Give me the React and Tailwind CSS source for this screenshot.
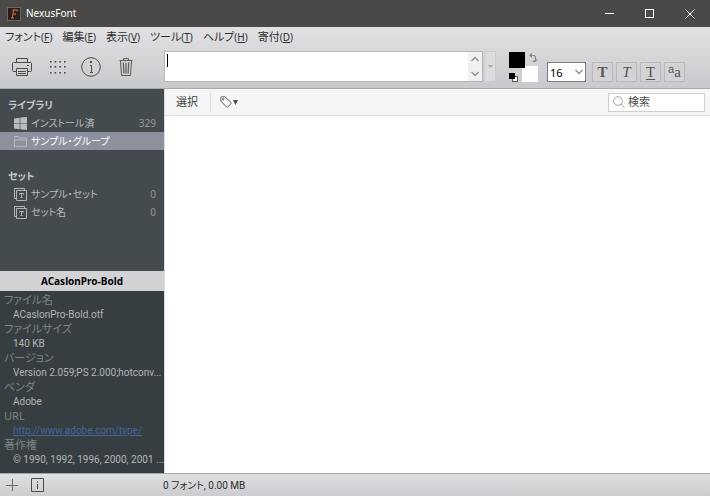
const menus = [
  { name: "フォント", hotkey: "F" },
  { name: "編集", hotkey: "E" },
  { name: "表示", hotkey: "V" },
  { name: "ツール", hotkey: "T" },
  { name: "ヘルプ", hotkey: "H" },
  { name: "寄付", hotkey: "D" },
];

const details = [
  { label: "ファイル名", value: "ACaslonPro-Bold.otf" },
  { label: "ファイルサイズ", value: "140 KB" },
  { label: "バージョン", value: "Version 2.059;PS 2.000;hotconv..." },
  { label: "ベンダ", value: "Adobe" },
  { label: "URL", value: "http://www.adobe.com/type/", link: true },
  { label: "著作権", value: "© 1990, 1992, 1996, 2000, 2001 ..." },
];

function PrinterIcon() {
  return (
    <svg width="20" height="20" viewBox="0 0 20 20" fill="none" stroke="#4b4a4c">
      <path d="M4.5 5.500v-4h11v4M4.500 14.500h-3a1 1 0 0 1-1-1v-7a1 1 0 0 1 1-1h17a1 1 0 0 1 1 1v7a1 1 0 0 1-1 1h-3M4.500 11.500h11v7h-11zM15 8.500h2" />
      <path d="M6 14.500h8M6 16.500h8" />
    </svg>
  );
}

function GridIcon() {
  return (
    <svg width="18" height="20" viewBox="0 0 18 20" fill="#4b4a4c">
      {[4, 9, 15].map((y) =>
        [2, 6.6, 11.3, 16].map((x) => <rect key={`${x}-${y}`} x={x} y={y} width="1.600" height="1.600" />)
      )}
    </svg>
  );
}

function InfoIcon() {
  return (
    <svg width="20" height="20" viewBox="0 0 20 20" fill="none" stroke="#4b4a4c">
      <circle cx="10" cy="10" r="9.3" />
      <path d="M9 8.500h1.500V15M9 15.500h3" />
      <rect x="9.5" y="4.5" width="1" height="1" fill="#4b4a4c" />
    </svg>
  );
}

function TrashIcon() {
  return (
    <svg width="14" height="20" viewBox="0 0 14 20" fill="none" stroke="#5b5a5c">
      <path d="M.5 3.500h13M4.500 3V1.500h5V3M1.500 4l1 14.500h9l1-14.500" />
      <path d="M4.300 5.500l.6 11M7 5.500v11M9.700 5.500l-.6 11" strokeWidth="1.200" />
    </svg>
  );
}

function WindowsIcon() {
  return (
    <svg width="13" height="13" viewBox="0 0 13 13" fill="#b9bcbe">
      <path d="M0 1.500l5.700-.8v5.500H0zM6.300.600L13 0v6.200H6.300zM0 6.800h5.700v5.500L0 11.500zM6.300 6.800H13V13l-6.700-.7z" />
    </svg>
  );
}

function FolderIcon() {
  return (
    <svg width="13" height="13" viewBox="0 0 13 13" fill="none" stroke="#b4b8c0">
      <path d="M.5 11.500v-10h4l1 1.500h7v8.500zM.5 5h12" />
    </svg>
  );
}

function SetIcon() {
  return (
    <svg width="13" height="13" viewBox="0 0 13 13" fill="none" stroke="#b0b4b6">
      <path d="M2.500 10.500h-2V.5h10v2M2.500 2.500h10v10h-10zM5.500 6.500v-1h4v1M7.500 5.500v4M6.500 9.500h2" />
    </svg>
  );
}

function Chevron({ up }) {
  return (
    <svg width="8" height="6" viewBox="0 0 8 6" fill="none" stroke="#8c8c8c" strokeWidth="1.300">
      <path d={up ? "M.5 5L4 1.500 7.500 5" : "M.5 1L4 4.500 7.500 1"} />
    </svg>
  );
}

function TitleBar() {
  return (
    <header className="flex h-[27px] shrink-0 items-center bg-[#4a4947] text-white">
      <svg className="ml-[7px]" width="14" height="14" viewBox="0 0 14 14">
        <rect x=".5" y=".5" width="13" height="13" fill="#29211f" stroke="#6b6765" />
        <path d="M5.500 3h5M6.500 3L5.200 11M5.500 7h3.500M4 11h2.800M10.500 3v1.500" fill="none" stroke="#b9603c" strokeWidth="1.300" />
      </svg>
      <h1 className="ml-[5px] flex-1 text-[10px]">NexusFont</h1>
      <button aria-label="最小化" className="flex w-10 justify-center">
        <svg width="10" height="10" stroke="#fff"><path d="M0 4.500h9" /></svg>
      </button>
      <button aria-label="最大化" className="flex w-10 justify-center">
        <svg width="10" height="10" fill="none" stroke="#fff"><rect x=".5" y=".5" width="8" height="8" /></svg>
      </button>
      <button aria-label="閉じる" className="flex w-10 justify-center">
        <svg width="10" height="10" stroke="#fff"><path d="M.5.500l9 9M9.500.500l-9 9" /></svg>
      </button>
    </header>
  );
}

function StyleButton({ label, children }) {
  return (
    <button
      aria-label={label}
      className="flex h-5 w-[21px] items-center justify-center border border-[#b9b8bb] bg-[#d3d2d5] font-['Liberation_Serif',serif] text-[15px] leading-none text-[#565557]"
    >
      {children}
    </button>
  );
}

function Toolbar() {
  return (
    <div className="flex h-[37px] shrink-0 items-start">
      <div className="flex w-[164px] shrink-0 items-center pt-[6px] pl-[12px]">
        <button aria-label="印刷"><PrinterIcon /></button>
        <button aria-label="一覧" className="ml-4"><GridIcon /></button>
        <button aria-label="情報" className="ml-[15px]"><InfoIcon /></button>
        <button aria-label="削除" className="ml-[18px]"><TrashIcon /></button>
      </div>
      <div className="relative h-[31px] flex-1 border border-[#b5b4b7] bg-white">
        <textarea
          aria-label="サンプルテキスト"
          className="block h-full w-full resize-none px-1 text-[12px] outline-none"
        />
        <span className="absolute top-[2px] left-[2px] h-[13px] w-px bg-black" />
        <div className="absolute inset-y-0 right-0 flex w-[14px] flex-col items-center justify-between bg-[#f1f1f2] py-1">
          <button aria-label="上へ"><Chevron up /></button>
          <button aria-label="下へ"><Chevron /></button>
        </div>
      </div>
      <button aria-label="履歴" className="ml-px flex h-[31px] w-3 items-center justify-center border border-[#cbcacd] bg-[#dcdbde]">
        <svg width="5" height="3" fill="#a5a4a7"><path d="M0 0h5L2.500 3z" /></svg>
      </button>
      <div className="mt-px ml-[13px] grid h-[30px] w-[30px] grid-cols-2">
        <div className="relative">
          <button aria-label="文字色" className="absolute top-0 left-0 z-10 size-4 bg-black" />
          <button aria-label="背景色" className="absolute top-[14px] left-[13px] size-4 bg-white" />
          <button aria-label="初期色" className="absolute top-[21px] left-0">
            <svg className="block" width="9" height="9">
              <rect x="3.500" y="3.500" width="5" height="5" fill="#fff" stroke="#555" />
              <rect width="6" height="6" fill="#000" />
            </svg>
          </button>
        </div>
        <button aria-label="色を入れ替え" className="mt-px ml-[5px] h-[9px]">
          <svg className="block" width="9" height="9" fill="#88878a">
            <path d="M0 2.500L3 0v5zM4 9l-.5-1L9 6 6.500 9z" />
            <path d="M2.500 2.500h2a2 2 0 0 1 2 2V7" fill="none" stroke="#88878a" strokeWidth="1.200" />
          </svg>
        </button>
      </div>
      <div className="relative mt-[11px] ml-2 h-5 w-[39px]">
        <select
          aria-label="サイズ"
          className="block h-full w-full appearance-none border border-[#7f7e81] bg-white pl-[2px] text-[11px] leading-none text-black"
        >
          <option>16</option>
        </select>
        <span className="pointer-events-none absolute top-[7px] right-[3px]">
          <Chevron />
        </span>
      </div>
      <div className="mt-[11px] mr-[25px] ml-[6px] flex gap-[3px]">
        <StyleButton label="太字"><b>T</b></StyleButton>
        <StyleButton label="斜体"><i>T</i></StyleButton>
        <StyleButton label="下線"><u className="underline-offset-2">T</u></StyleButton>
        <StyleButton label="アンチエイリアス">
          <span className="mb-[6px] font-['Liberation_Sans',sans-serif] text-[11px]">a</span>
          <span className="mt-px">a</span>
        </StyleButton>
      </div>
    </div>
  );
}

function SideItem({ icon, name, count, selected }) {
  return (
    <li>
      <button
        className={`flex h-[18px] w-full items-center pr-2 pl-[14px] text-[10px] ${
          selected ? "bg-[#8d919d] text-white" : "text-[#b9bcbe]"
        }`}
      >
        {icon}
        <span className="ml-1 flex-1 text-left">{name}</span>
        <span className="text-[#92979a]">{count}</span>
      </button>
    </li>
  );
}

function Sidebar() {
  return (
    <aside className="flex w-[164px] shrink-0 flex-col bg-[#444b4f]">
      <nav className="flex-1 pt-[7px]">
        <h2 className="h-[18px] pl-2 text-[10px] leading-[18px] font-bold text-[#c6c9ca]">ライブラリ</h2>
        <ul>
          <SideItem icon={<WindowsIcon />} name="インストール済" count="329" />
          <SideItem icon={<FolderIcon />} name="サンプル・グループ" selected />
        </ul>
        <h2 className="mt-[17px] h-[18px] pl-2 text-[10px] leading-[18px] font-bold text-[#c6c9ca]">セット</h2>
        <ul>
          <SideItem icon={<SetIcon />} name="サンプル・セット" count="0" />
          <SideItem icon={<SetIcon />} name="セット名" count="0" />
        </ul>
      </nav>
      <section className="shrink-0 bg-[#373e41]">
        <h2 className="h-5 bg-[#d2d1d4] text-center text-[10px] leading-5 font-bold text-black">
          ACaslonPro-Bold
        </h2>
        <dl className="pt-[2px] pb-[6px]">
          {details.map((d) => (
            <div key={d.label}>
              <dt className="pl-1 text-[11px] leading-[14px] text-[#7f8487]">{d.label}</dt>
              <dd className="pl-[13px] font-['Roboto',sans-serif] text-[10px] leading-[15px] whitespace-nowrap text-[#b1b5b7]">
                {d.link ? (
                  <a href="#" className="text-[#46649e] underline">{d.value}</a>
                ) : (
                  d.value
                )}
              </dd>
            </div>
          ))}
        </dl>
      </section>
    </aside>
  );
}

function Content() {
  return (
    <main className="flex min-w-0 flex-1 flex-col border-l border-[#dcdcde] bg-white">
      <div className="flex h-[27px] shrink-0 items-center border-b border-[#dedede] bg-[#f6f6f6] pr-[5px] pl-[11px]">
        <button className="text-[11px] text-[#3c3c3c]">選択</button>
        <div className="mr-[9px] ml-[12px] h-[19px] w-px bg-[#dedede]" />
        <button aria-label="タグ" className="flex items-center">
          <svg width="12" height="12" viewBox="0 0 12 12" fill="none" stroke="#5c5c5c">
            <path d="M.8 1.800Q.8.800 1.800.800H5L11 6.500a.8.800 0 0 1 0 1.200L7.700 11a.8.800 0 0 1-1.200 0L.8 5z" />
            <circle cx="3.200" cy="3.200" r=".7" />
          </svg>
          <svg className="ml-px" width="5" height="5" fill="#4c4c4c"><path d="M0 0h5L2.500 5z" /></svg>
        </button>
        <label className="ml-auto flex h-[19px] w-[97px] items-center border border-[#cfcfcf] bg-white pl-1">
          <svg className="shrink-0" width="12" height="12" viewBox="0 0 12 12" fill="none" stroke="#a5a5a5">
            <circle cx="5" cy="5" r="4.300" />
            <path d="M8 8l3.500 3.500" />
          </svg>
          <input
            type="search"
            aria-label="検索"
            placeholder="検索"
            className="ml-[3px] w-full min-w-0 text-[11px] outline-none placeholder:text-[#4c4c4c]"
          />
        </label>
      </div>
      <div className="flex-1" />
    </main>
  );
}

export default function App() {
  return (
    <div className="flex h-screen flex-col bg-white font-['Noto_Sans','Noto_Sans_CJK_JP',sans-serif] [font-feature-settings:'palt']">
      <TitleBar />
      <div className="shrink-0 border-b border-[#aaa9ad] bg-linear-to-b from-[#e2e1e4] to-[#c9c8cc]">
        <nav className="flex h-6 items-center gap-[10px] pb-[4px] pl-[5px]">
          {menus.map((m) => (
            <button key={m.name} className="flex items-baseline text-[11px] leading-4 whitespace-nowrap text-[#303030]">
              {m.name}
              <span className="text-[10px]">
                (<u>{m.hotkey}</u>)
              </span>
            </button>
          ))}
        </nav>
        <Toolbar />
      </div>
      <div className="flex min-h-0 flex-1">
        <Sidebar />
        <Content />
      </div>
      <footer className="flex h-[23px] shrink-0 items-center border-t border-[#a5a4a8] bg-linear-to-b from-[#dfdee1] to-[#cdccd0]">
        <div className="flex w-[163px] items-center gap-[13px] pl-[6px]">
          <button aria-label="追加">
            <svg className="block" width="12" height="12" stroke="#6b6a6d"><path d="M0 6.500h12M6.500 0v12" /></svg>
          </button>
          <button aria-label="詳細">
            <svg className="block" width="14" height="14" fill="none" stroke="#4b4a4c">
              <path d="M.5.500h12v13H.5zM6.500 6v5M6.500 3.500v1.200" />
            </svg>
          </button>
        </div>
        <p className="font-['Roboto','Noto_Sans_CJK_JP',sans-serif] text-[10px] text-[#2c2c2c]">0 フォント, 0.00 MB</p>
      </footer>
    </div>
  );
}
